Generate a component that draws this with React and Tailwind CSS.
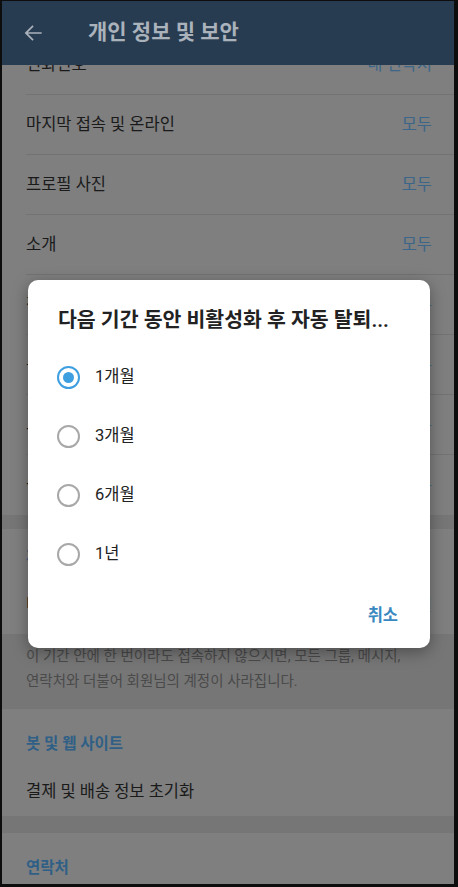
const FONT = { fontFamily: "Roboto, 'Noto Sans CJK KR', 'Noto Sans', sans-serif" };

const topRows = [
  { label: "전화번호", value: "내 연락처" },
  { label: "마지막 접속 및 온라인", value: "모두" },
  { label: "프로필 사진", value: "모두" },
  { label: "소개", value: "모두" },
  { label: "전달된 메시지", value: "모두" },
  { label: "통화", value: "모두" },
  { label: "그룹", value: "모두" },
  { label: "음성 메시지", value: "모두" },
];

const options = ["1개월", "3개월", "6개월", "1년"];

function Row({ label, value, last }) {
  return (
    <div className="relative h-[60px] flex items-center justify-between pl-[24px] pr-[22px]">
      <span className="text-[16.5px] text-[#1a1a1a]">{label}</span>
      {value && <span className="text-[16.5px] text-[#3b6689]">{value}</span>}
      {!last && <div className="absolute bottom-0 left-[24px] right-0 h-px bg-[#737373]" />}
    </div>
  );
}

function SectionHeader({ children }) {
  return (
    <div className="h-[54px] pl-[24px] pt-[23px]">
      <span className="text-[15.5px] leading-[22px] font-semibold text-[#2f5f86]">{children}</span>
    </div>
  );
}

function Radio({ checked }) {
  return checked ? (
    <span className="w-[23px] h-[23px] rounded-full border-[2.5px] border-[#3e9fe0] flex items-center justify-center">
      <span className="w-[11px] h-[11px] rounded-full bg-[#3e9fe0]" />
    </span>
  ) : (
    <span className="w-[23px] h-[23px] rounded-full border-[2px] border-[#a8a8a8]" />
  );
}

export default function App() {
  return (
    <div
      className="relative w-[458px] h-[887px] overflow-hidden bg-[#7f7f7f] border-l-2 border-r-4 border-b-[3px] border-t border-[#0d0d0d] flex flex-col"
      style={FONT}
    >
      <header className="relative z-10 h-[64px] shrink-0 bg-[#283c51] flex items-center">
        <svg width="26" height="26" viewBox="0 0 24 24" className="ml-[18px]" fill="#a9b1ba">
          <path d="M20 11.2H7.3l5.3-5.3L11.5 4.8 4.3 12l7.2 7.2 1.1-1.1-5.3-5.3H20z" />
        </svg>
        <h1 className="ml-[42px] text-[21px] font-semibold text-[#aab2bb]">개인 정보 및 보안</h1>
      </header>

      <div className="flex-1 overflow-hidden">
        <div className="-mt-[30px]">
          {topRows.map((r, i) => (
            <Row key={r.label} {...r} last={i === topRows.length - 1} />
          ))}
        </div>
        <div className="h-[14px] bg-[#767676]" />
        <div className="h-[48px] pl-[24px] pt-[16px]">
          <span className="text-[15.5px] font-semibold text-[#2f5f86]">계정 자동 삭제</span>
        </div>
        <div className="h-[57px] flex items-center justify-between pl-[24px] pr-[22px]">
          <span className="text-[16.5px] text-[#1a1a1a]">다음 기간 동안 비활성화 시</span>
          <span className="text-[16.5px] text-[#3b6689]">6개월</span>
        </div>
        <div className="bg-[#767676] pl-[24px] pr-[40px] pt-[10px] pb-[16px] h-[75px]">
          <p className="text-[14.5px] leading-[25px] text-[#4a4a4a]">
            이 기간 안에 한 번이라도 접속하지 않으시면, 모든 그룹, 메시지, 연락처와 더불어 회원님의 계정이 사라집니다.
          </p>
        </div>
        <SectionHeader>봇 및 웹 사이트</SectionHeader>
        <div className="h-[53px] flex items-center pl-[24px] pt-[5px]">
          <span className="text-[16.5px] text-[#1a1a1a]">결제 및 배송 정보 초기화</span>
        </div>
        <div className="h-[17px] bg-[#767676]" />
        <SectionHeader>연락처</SectionHeader>
      </div>

      <div className="absolute left-[26px] top-[279px] w-[402px] h-[368px] rounded-[10px] bg-white shadow-[0_4px_16px_rgba(0,0,0,0.35)] flex flex-col">
        <h2 className="pl-[30px] pt-[27px] text-[20.5px] leading-[26px] font-semibold text-[#222] whitespace-nowrap">
          다음 기간 동안 비활성화 후 자동 탈퇴...
        </h2>
        <div className="mt-[15px] flex flex-col">
          {options.map((o, i) => (
            <div key={o} className="h-[59px] flex items-center pl-[29px]">
              <Radio checked={i === 0} />
              <span className="ml-[15px] text-[16.5px] text-[#222]">{o}</span>
            </div>
          ))}
        </div>
        <div className="flex-1 flex items-center justify-end pr-[32px]">
          <span className="text-[16.5px] font-semibold text-[#3a88c0]">취소</span>
        </div>
      </div>
    </div>
  );
}
